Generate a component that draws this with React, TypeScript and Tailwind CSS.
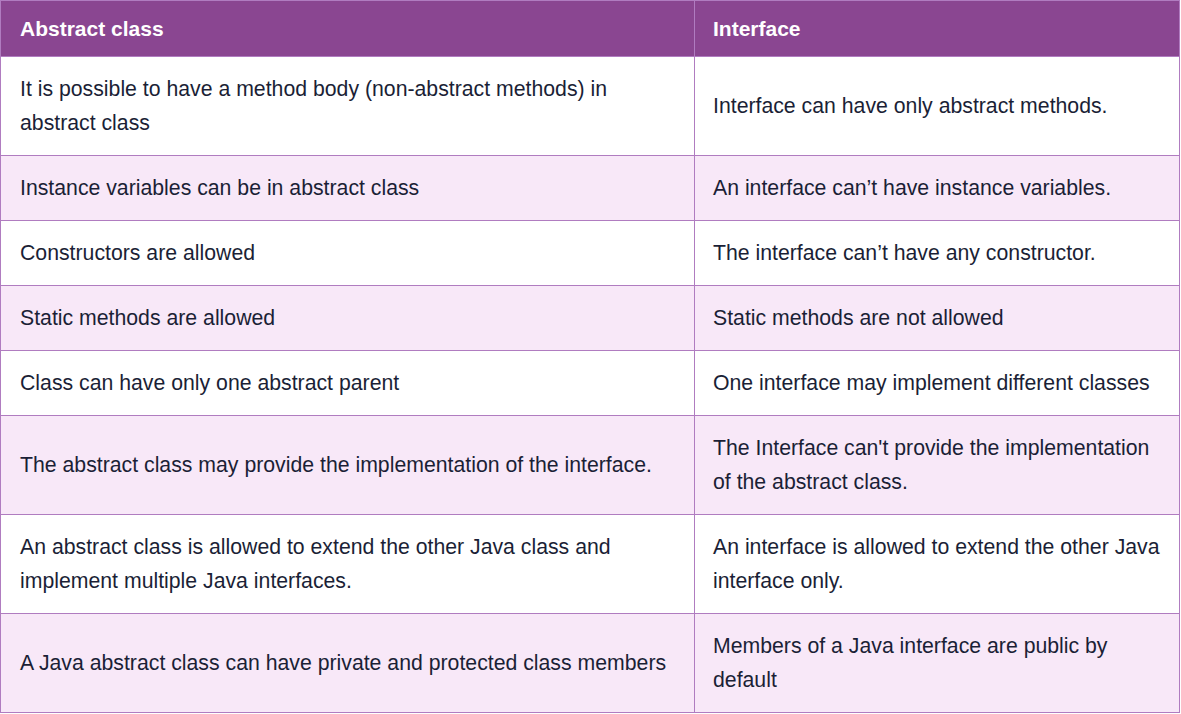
const rows: [string, string][] = [
  ["It is possible to have a method body (non-abstract methods) in abstract class", "Interface can have only abstract methods."],
  ["Instance variables can be in abstract class", "An interface can’t have instance variables."],
  ["Constructors are allowed", "The interface can’t have any constructor."],
  ["Static methods are allowed", "Static methods are not allowed"],
  ["Class can have only one abstract parent", "One interface may implement different classes"],
  ["The abstract class may provide the implementation of the interface.", "The Interface can't provide the implementation of the abstract class."],
  ["An abstract class is allowed to extend the other Java class and implement multiple Java interfaces.", "An interface is allowed to extend the other Java interface only."],
  ["A Java abstract class can have private and protected class members", "Members of a Java interface are public by default"],
];

export default function App() {
  return (
    <div className="bg-white font-['Liberation_Sans',Arial,sans-serif]">
      <table className="w-[1180px] table-fixed border-collapse border border-[#b07cc0]">
        <colgroup>
          <col className="w-[694px]" />
          <col />
        </colgroup>
        <thead>
          <tr className="h-[56px] bg-[#8a4691] text-left text-[21px] font-bold text-white">
            <th className="border border-[#b07cc0] px-[19px]">Abstract class</th>
            <th className="border border-[#b07cc0] px-[18px]">Interface</th>
          </tr>
        </thead>
        <tbody>
          {rows.map(([a, b], i) => (
            <tr
              key={i}
              className={`${i % 2 === 1 ? "bg-[#f8e8f8]" : "bg-white"} text-[21.25px] leading-[34px] text-[#1b1f36]`}
            >
              <td className="border border-[#b07cc0] py-[15px] pl-[19px] pr-5 align-middle">{a}</td>
              <td className="border border-[#b07cc0] py-[15px] pl-[18px] pr-4 align-middle">{b}</td>
            </tr>
          ))}
        </tbody>
      </table>
    </div>
  );
}
